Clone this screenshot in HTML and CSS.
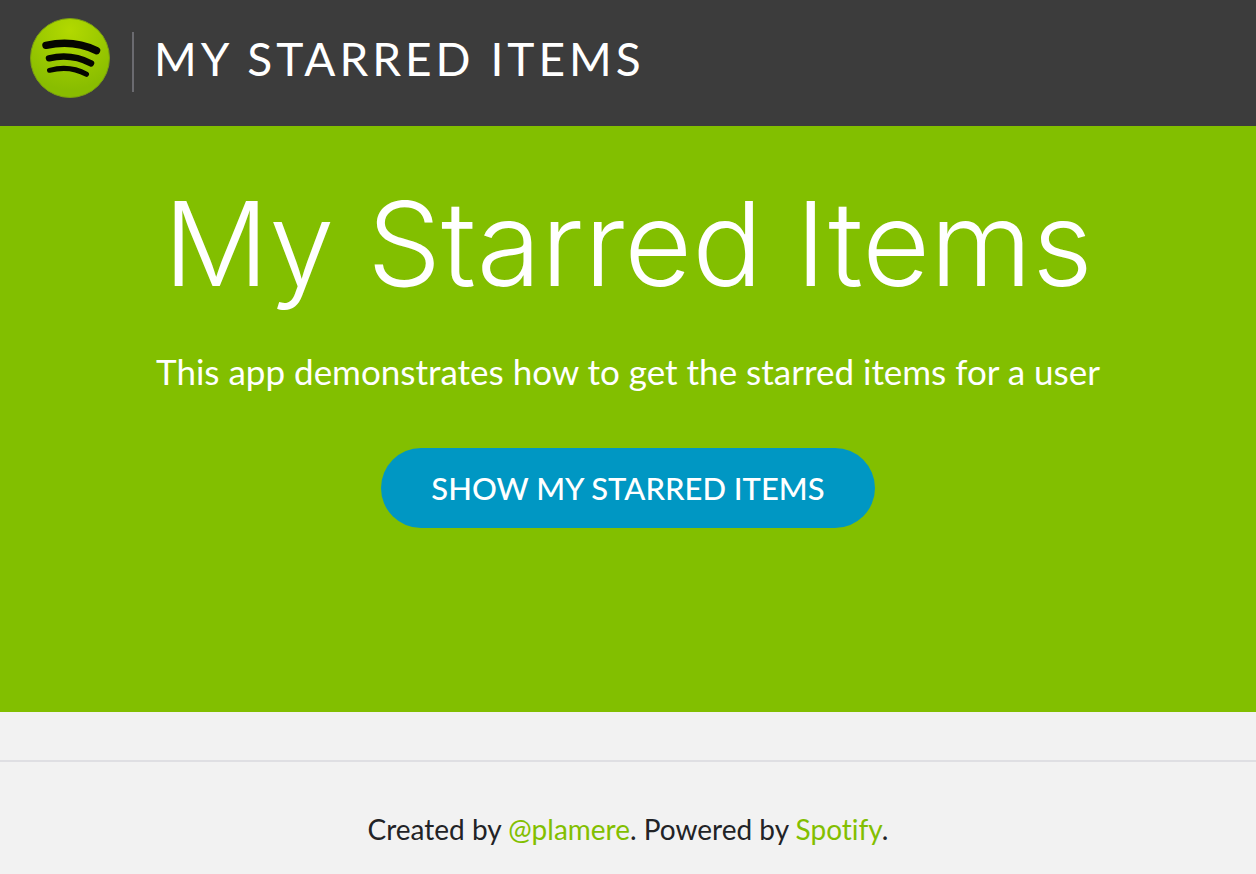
FILE: index.html
```html
<!DOCTYPE html>
<html lang="en">
<head>
<meta charset="utf-8">
<meta name="viewport" content="width=device-width, initial-scale=1">
<title>My Starred Items</title>
<link rel="stylesheet" href="styles.css">
</head>
<body>
<header class="topbar">
  <svg class="logo" viewBox="0 0 80 80" role="img" aria-label="Spotify">
    <defs>
      <radialGradient id="disc" cx="0.5" cy="0.15" r="0.75">
        <stop offset="0" stop-color="#b2d900"/>
        <stop offset="1" stop-color="#89bd00"/>
      </radialGradient>
    </defs>
    <circle cx="40" cy="40" r="39.5" fill="url(#disc)" stroke="#7a9e12"/>
    <g fill="none" stroke="#050600" stroke-linecap="round">
      <path d="M16 27.300Q44 21.500 66.500 32.700" stroke-width="7.500"/>
      <path d="M19 40.300Q41 35 61 45.300" stroke-width="6.500"/>
      <path d="M19.500 52.300Q40 47 56.500 56.300" stroke-width="5"/>
    </g>
  </svg>
  <span class="brand">MY STARRED ITEMS</span>
</header>
<main class="hero">
  <h1 class="title">My Starred Items</h1>
  <p class="lead">This app demonstrates how to get the starred items for a user</p>
  <button class="action" type="button">SHOW MY STARRED ITEMS</button>
</main>
<footer class="footer">
  <p class="credits">Created by <a href="#plamere">@plamere</a>. Powered by <a href="#spotify">Spotify</a>.</p>
</footer>
</body>
</html>
```
FILE: styles.css
```css
* { box-sizing: border-box; }
body {
  margin: 0;
  background: #f2f2f2;
  color: #222326;
  font-family: Lato, "Liberation Sans", sans-serif;
  font-variant-ligatures: none;
}
.topbar {
  display: flex;
  align-items: flex-start;
  gap: 22px;
  padding: 18px 30px 28px;
  background: #3c3c3c;
}
.logo { width: 80px; height: 80px; flex: none; }
.brand {
  margin-top: 14px;
  padding: 0 0 6px 20px;
  border-left: 2px solid #6b6b70;
  color: #fff;
  font-size: 46px;
  line-height: 54px;
  letter-spacing: 4px;
}
.hero {
  padding: 48px 20px 184px;
  background: #82bf00;
  color: #fff;
  text-align: center;
}
.title {
  margin: 0;
  font-family: Inter, Lato, sans-serif;
  font-size: 117px;
  font-weight: 300;
  line-height: 140px;
}
.lead {
  margin: 30px 0 50px;
  font-size: 35px;
  line-height: 54px;
}
.action {
  padding: 0 50px;
  border: 0;
  border-radius: 40px;
  background: #0097c3;
  color: #fff;
  font: 500 31px/80px Lato, "Liberation Sans", sans-serif;
}
.footer {
  margin-top: 48px;
  border-top: 2px solid #dfdfe3;
  text-align: center;
}
.credits {
  margin: 0;
  padding: 46px 20px 24px;
  font-size: 28px;
  line-height: 42px;
}
.credits a { color: #82bf00; text-decoration: none; }
```
